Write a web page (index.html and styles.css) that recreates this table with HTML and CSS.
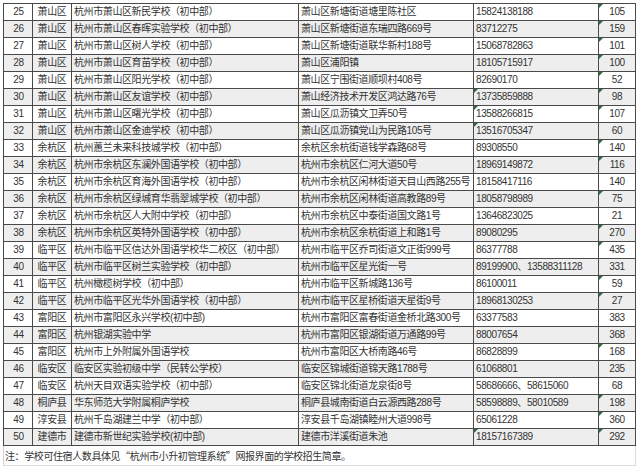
FILE: index.html
```html
<!DOCTYPE html>
<html lang="zh-CN">
<head>
<meta charset="utf-8">
<title>杭州市民办初中招生学校</title>
<link rel="stylesheet" href="styles.css">
</head>
<body>
<div class="sheet">
  <div class="row"><div class="c no">25</div><div class="c dist">萧山区</div><div class="c name">杭州市萧山区新民学校（初中部）</div><div class="c addr">萧山区新塘街道塘里陈社区</div><div class="c tel">15824138188</div><div class="c num t">105</div></div>
  <div class="row"><div class="c no">26</div><div class="c dist">萧山区</div><div class="c name">杭州市萧山区春晖实验学校（初中部）</div><div class="c addr">萧山区新塘街道东瑞四路669号</div><div class="c tel">83712275</div><div class="c num t">159</div></div>
  <div class="row"><div class="c no">27</div><div class="c dist">萧山区</div><div class="c name">杭州市萧山区树人学校（初中部）</div><div class="c addr">萧山区新塘街道联华新村188号</div><div class="c tel">15068782863</div><div class="c num t">101</div></div>
  <div class="row"><div class="c no">28</div><div class="c dist">萧山区</div><div class="c name">杭州市萧山区育苗学校（初中部）</div><div class="c addr">萧山区浦阳镇</div><div class="c tel">18105715917</div><div class="c num t">100</div></div>
  <div class="row"><div class="c no">29</div><div class="c dist">萧山区</div><div class="c name">杭州市萧山区阳光学校（初中部）</div><div class="c addr">萧山区宁围街道顺坝村408号</div><div class="c tel">82690170</div><div class="c num t">52</div></div>
  <div class="row"><div class="c no">30</div><div class="c dist">萧山区</div><div class="c name">杭州市萧山区友谊学校（初中部）</div><div class="c addr">萧山经济技术开发区鸿达路76号</div><div class="c tel t">13735859888</div><div class="c num t">98</div></div>
  <div class="row"><div class="c no">31</div><div class="c dist">萧山区</div><div class="c name">杭州市萧山区曙光学校（初中部）</div><div class="c addr">萧山区瓜沥镇文卫弄50号</div><div class="c tel t">13588266815</div><div class="c num t">107</div></div>
  <div class="row"><div class="c no">32</div><div class="c dist">萧山区</div><div class="c name">杭州市萧山区金迪学校（初中部）</div><div class="c addr">萧山区瓜沥镇党山为民路105号</div><div class="c tel t">13516705347</div><div class="c num">60</div></div>
  <div class="row"><div class="c no">33</div><div class="c dist">余杭区</div><div class="c name">杭州蕙兰未来科技城学校（初中部）</div><div class="c addr">余杭区余杭街道钱学森路68号</div><div class="c tel">89308550</div><div class="c num t">140</div></div>
  <div class="row"><div class="c no">34</div><div class="c dist">余杭区</div><div class="c name">杭州市余杭区东澜外国语学校（初中部）</div><div class="c addr">杭州市余杭区仁河大道50号</div><div class="c tel">18969149872</div><div class="c num t">116</div></div>
  <div class="row"><div class="c no">35</div><div class="c dist">余杭区</div><div class="c name">杭州市余杭区育海外国语学校（初中部）</div><div class="c addr">杭州市余杭区闲林街道天目山西路255号</div><div class="c tel">18158417116</div><div class="c num">140</div></div>
  <div class="row"><div class="c no">36</div><div class="c dist">余杭区</div><div class="c name">杭州市余杭区绿城育华翡翠城学校（初中部）</div><div class="c addr">杭州市余杭区闲林街道高教路89号</div><div class="c tel">18058798989</div><div class="c num t">75</div></div>
  <div class="row"><div class="c no">37</div><div class="c dist">余杭区</div><div class="c name">杭州市余杭区人大附中学校（初中部）</div><div class="c addr">杭州市余杭区中泰街道国文路1号</div><div class="c tel">13646823025</div><div class="c num">21</div></div>
  <div class="row"><div class="c no">38</div><div class="c dist">余杭区</div><div class="c name">杭州市余杭区英特外国语学校（初中部）</div><div class="c addr">杭州市余杭区余杭街道上和路1号</div><div class="c tel">89080295</div><div class="c num t">270</div></div>
  <div class="row"><div class="c no">39</div><div class="c dist">临平区</div><div class="c name">杭州市临平区信达外国语学校华二校区（初中部）</div><div class="c addr">杭州市临平区乔司街道文正街999号</div><div class="c tel">86377788</div><div class="c num t">435</div></div>
  <div class="row"><div class="c no">40</div><div class="c dist">临平区</div><div class="c name">杭州市临平区树兰实验学校（初中部）</div><div class="c addr">杭州市临平区星光街一号</div><div class="c tel">89199900、13588311128</div><div class="c num">331</div></div>
  <div class="row"><div class="c no">41</div><div class="c dist">临平区</div><div class="c name">杭州橄榄树学校（初中部）</div><div class="c addr">杭州市临平区新城路136号</div><div class="c tel">86100011</div><div class="c num t">59</div></div>
  <div class="row"><div class="c no">42</div><div class="c dist">临平区</div><div class="c name">杭州市临平区光华外国语学校（初中部）</div><div class="c addr">杭州市临平区星桥街道天星街9号</div><div class="c tel">18968130253</div><div class="c num t">27</div></div>
  <div class="row"><div class="c no">43</div><div class="c dist">富阳区</div><div class="c name">杭州市富阳区永兴学校(初中部)</div><div class="c addr">杭州市富阳区富春街道金桥北路300号</div><div class="c tel">63377583</div><div class="c num">383</div></div>
  <div class="row"><div class="c no">44</div><div class="c dist">富阳区</div><div class="c name">杭州银湖实验中学</div><div class="c addr">杭州市富阳区银湖街道万通路99号</div><div class="c tel">88007654</div><div class="c num">368</div></div>
  <div class="row"><div class="c no">45</div><div class="c dist">富阳区</div><div class="c name">杭州市上外附属外国语学校</div><div class="c addr">杭州市富阳区大桥南路46号</div><div class="c tel">86828899</div><div class="c num t">168</div></div>
  <div class="row"><div class="c no">46</div><div class="c dist">临安区</div><div class="c name">临安区实验初级中学（民转公学校）</div><div class="c addr">临安区锦城街道锦天路1788号</div><div class="c tel">61068801</div><div class="c num">235</div></div>
  <div class="row"><div class="c no">47</div><div class="c dist">临安区</div><div class="c name">杭州天目双语实验学校（初中部）</div><div class="c addr">临安区锦北街道龙泉街8号</div><div class="c tel">58686666、58615060</div><div class="c num">68</div></div>
  <div class="row"><div class="c no">48</div><div class="c dist">桐庐县</div><div class="c name">华东师范大学附属桐庐学校</div><div class="c addr">桐庐县城南街道白云源西路288号</div><div class="c tel">58598889、58010589</div><div class="c num t">198</div></div>
  <div class="row"><div class="c no">49</div><div class="c dist">淳安县</div><div class="c name">杭州千岛湖建兰中学（初中部）</div><div class="c addr">淳安县千岛湖镇睦州大道998号</div><div class="c tel">65061228</div><div class="c num t">360</div></div>
  <div class="row"><div class="c no">50</div><div class="c dist">建德市</div><div class="c name">建德市新世纪实验学校(初中部)</div><div class="c addr">建德市洋溪街道朱池</div><div class="c tel t">18157167389</div><div class="c num t">292</div></div>
</div>
<div class="note">注：学校可住宿人数具体见“杭州市小升初管理系统”网报界面的学校招生简章。</div>
</body>
</html>
```
FILE: styles.css
```css
html, body {
  margin: 0;
  padding: 0;
  background: #ffffff;
}

body {
  font-family: "Liberation Sans", "Noto Sans CJK SC", sans-serif;
  font-size: 10px;
  letter-spacing: -0.4px;
  color: #333333;
}

.sheet {
  display: flex;
  flex-direction: column;
  width: max-content;
  margin: 3px 0 0 3px;
  border-top: 1px solid #4a4a4a;
  border-left: 1px solid #4a4a4a;
}

.row {
  display: grid;
  grid-template-columns: 29px 39px 227px 175px 125px 37px;
  height: 17px;
}

.row:nth-child(even) {
  background: #eeeeee;
}

.c {
  position: relative;
  box-sizing: border-box;
  height: 17px;
  line-height: 16px;
  padding: 0 2px;
  border-right: 1px solid #4a4a4a;
  border-bottom: 1px solid #4a4a4a;
  white-space: nowrap;
  overflow: hidden;
}

.no,
.dist,
.num {
  text-align: center;
  padding: 0;
}

.no {
  padding-left: 1px;
}

.t::before {
  content: "";
  position: absolute;
  top: 0;
  left: 0;
  width: 0;
  height: 0;
  border-top: 4px solid #2f6b3c;
  border-right: 4px solid transparent;
}

.note {
  box-sizing: border-box;
  width: 633px;
  height: 20px;
  margin-left: 3px;
  padding-left: 1px;
  line-height: 20px;
  font-family: "Noto Sans CJK SC", sans-serif;
  border-left: 1px solid #d0d0d0;
  border-right: 1px solid #dcdcdc;
  border-bottom: 1px solid #dcdcdc;
  white-space: nowrap;
}
```
